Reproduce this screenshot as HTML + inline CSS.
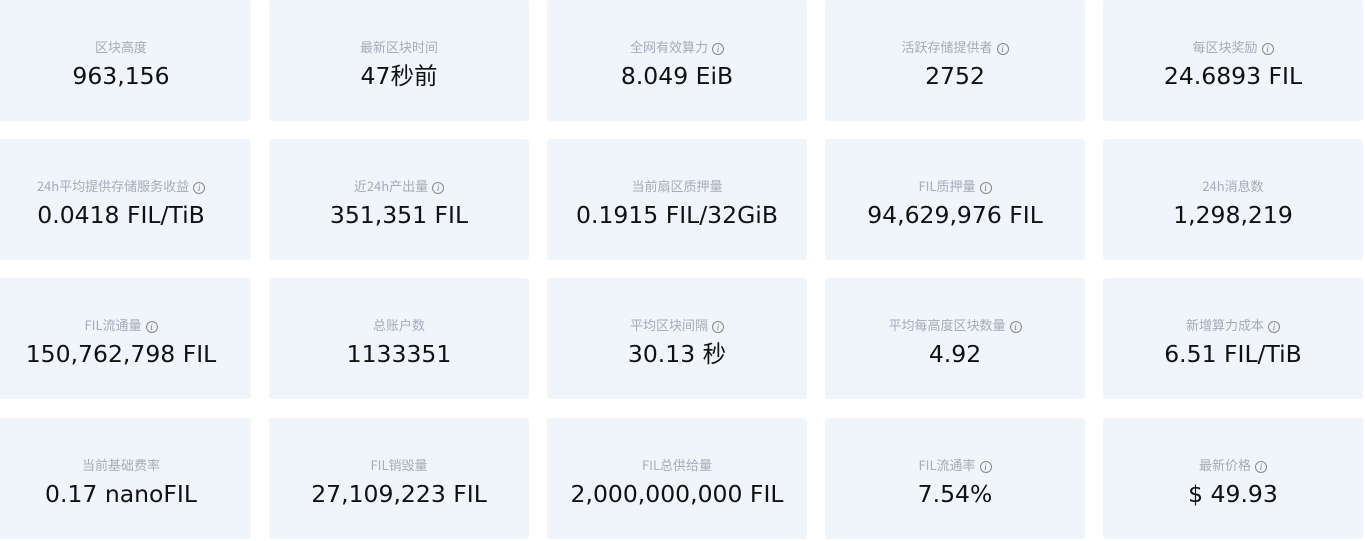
<!DOCTYPE html>
<html><head><meta charset="utf-8"><style>
body{margin:0;width:1365px;height:541px;background:#fff;position:relative;overflow:hidden;font-family:"DejaVu Sans","Noto Sans CJK SC",sans-serif}
.c{position:absolute;width:260px;height:121px;background:#f0f5fb;border-radius:3px;text-align:center}
.l{position:absolute;top:37px;left:0;right:0;font-size:13px;line-height:19px;color:#a3acba;font-family:"Noto Sans CJK SC",sans-serif}
.v{position:absolute;top:60px;left:0;right:0;font-size:23.5px;line-height:32px;color:#111}
.i{display:inline-block;width:10px;height:10px;border:1px solid #888;border-radius:50%;font-size:9px;line-height:10px;color:#777;font-style:italic;font-family:"Liberation Serif",serif;vertical-align:0px;margin-left:4px}
</style></head><body>
<div class="c" style="left:-9px;top:0"><div class="l">区块高度</div><div class="v">963,156</div></div>
<div class="c" style="left:269px;top:0"><div class="l">最新区块时间</div><div class="v">47秒前</div></div>
<div class="c" style="left:547px;top:0"><div class="l">全网有效算力<span class="i">i</span></div><div class="v">8.049 EiB</div></div>
<div class="c" style="left:825px;top:0"><div class="l">活跃存储提供者<span class="i">i</span></div><div class="v">2752</div></div>
<div class="c" style="left:1103px;top:0"><div class="l">每区块奖励<span class="i">i</span></div><div class="v">24.6893 FIL</div></div>

<div class="c" style="left:-9px;top:139px"><div class="l">24h平均提供存储服务收益<span class="i">i</span></div><div class="v">0.0418 FIL/TiB</div></div>
<div class="c" style="left:269px;top:139px"><div class="l">近24h产出量<span class="i">i</span></div><div class="v">351,351 FIL</div></div>
<div class="c" style="left:547px;top:139px"><div class="l">当前扇区质押量</div><div class="v">0.1915 FIL/32GiB</div></div>
<div class="c" style="left:825px;top:139px"><div class="l">FIL质押量<span class="i">i</span></div><div class="v">94,629,976 FIL</div></div>
<div class="c" style="left:1103px;top:139px"><div class="l">24h消息数</div><div class="v">1,298,219</div></div>

<div class="c" style="left:-9px;top:278px"><div class="l">FIL流通量<span class="i">i</span></div><div class="v">150,762,798 FIL</div></div>
<div class="c" style="left:269px;top:278px"><div class="l">总账户数</div><div class="v">1133351</div></div>
<div class="c" style="left:547px;top:278px"><div class="l">平均区块间隔<span class="i">i</span></div><div class="v">30.13 秒</div></div>
<div class="c" style="left:825px;top:278px"><div class="l">平均每高度区块数量<span class="i">i</span></div><div class="v">4.92</div></div>
<div class="c" style="left:1103px;top:278px"><div class="l">新增算力成本<span class="i">i</span></div><div class="v">6.51 FIL/TiB</div></div>

<div class="c" style="left:-9px;top:418px"><div class="l">当前基础费率</div><div class="v">0.17 nanoFIL</div></div>
<div class="c" style="left:269px;top:418px"><div class="l">FIL销毁量</div><div class="v">27,109,223 FIL</div></div>
<div class="c" style="left:547px;top:418px"><div class="l">FIL总供给量</div><div class="v">2,000,000,000 FIL</div></div>
<div class="c" style="left:825px;top:418px"><div class="l">FIL流通率<span class="i">i</span></div><div class="v">7.54%</div></div>
<div class="c" style="left:1103px;top:418px"><div class="l">最新价格<span class="i">i</span></div><div class="v">$ 49.93</div></div>
</body></html>
